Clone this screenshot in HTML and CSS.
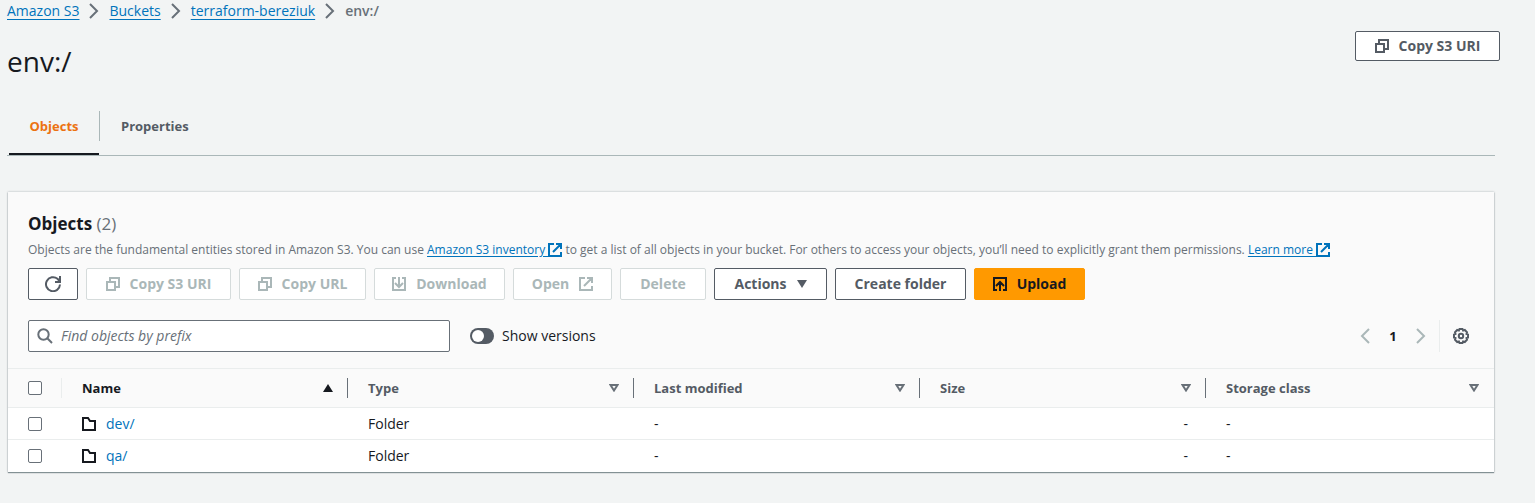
FILE: index.html
```html
<!DOCTYPE html>
<html lang="en">
<head>
<meta charset="utf-8">
<title>env:/ - S3 bucket</title>
<link rel="stylesheet" href="styles.css">
</head>
<body>
<svg class="sprite" aria-hidden="true">
  <symbol id="copy" viewBox="0 0 14 14"><path d="M1 5h8v8H1zM4 4V1h9v9h-3" /></symbol>
  <symbol id="chevron" viewBox="0 0 10 16"><path d="M1 1l7 7-7 7" /></symbol>
  <symbol id="external" viewBox="0 0 14 14"><path d="M6 1H1v12h12V9M8 1h5v5M13 1L5 9" /></symbol>
  <symbol id="download" viewBox="0 0 14 14"><path d="M4 1H1v12h12V1h-3M7 0v10M3 6l4 4 4-4" /></symbol>
  <symbol id="upload" viewBox="0 0 14 14"><path d="M4 13H1V1h12v12h-3M7 14V5M3 9l4-4 4 4" /></symbol>
  <symbol id="folder" viewBox="0 0 14 14"><path d="M1 1h5l2 3h5v9H1z" /></symbol>
  <symbol id="sort" viewBox="0 0 10 8"><path d="M1.500 1h7L5 6.500z" /></symbol>
</svg>
<header class="page-header">
  <nav class="breadcrumbs" aria-label="Breadcrumbs">
    <a href="#s3">Amazon S3</a>
    <svg class="crumb-arrow"><use href="#chevron"/></svg>
    <a href="#buckets">Buckets</a>
    <svg class="crumb-arrow"><use href="#chevron"/></svg>
    <a href="#bucket">terraform-bereziuk</a>
    <svg class="crumb-arrow"><use href="#chevron"/></svg>
    <span class="crumb-current">env:/</span>
  </nav>
  <div class="title-row">
    <h1>env:/</h1>
    <button class="btn btn-copy-uri btn-short" type="button"><svg class="icon"><use href="#copy"/></svg>Copy S3 URI</button>
  </div>
</header>
<main>
  <div class="tabs" role="tablist">
    <button class="tab tab-active" type="button" role="tab" aria-selected="true">Objects</button>
    <button class="tab" type="button" role="tab" aria-selected="false">Properties</button>
  </div>
  <section class="card">
    <div class="card-head">
      <h2>Objects <span class="count">(2)</span></h2>
      <p class="description">Objects are the fundamental entities stored in Amazon S3. You can use <a href="#inventory">Amazon S3 inventory <svg class="icon"><use href="#external"/></svg></a> to get a list of all objects in your bucket. For others to access your objects, you’ll need to explicitly grant them permissions. <a href="#learn">Learn more <svg class="icon"><use href="#external"/></svg></a></p>
      <div class="actions">
        <button class="btn btn-refresh" type="button" aria-label="Refresh"><svg class="icon-refresh" viewBox="0 0 16 16"><path d="M15 8.500A7 7 0 1 1 12.500 2.800L14.500 5M15 0v6H10" /></svg></button>
        <button class="btn btn-copy-uri" type="button" disabled><svg class="icon"><use href="#copy"/></svg>Copy S3 URI</button>
        <button class="btn btn-copy-url" type="button" disabled><svg class="icon"><use href="#copy"/></svg>Copy URL</button>
        <button class="btn btn-download" type="button" disabled><svg class="icon"><use href="#download"/></svg>Download</button>
        <button class="btn btn-open" type="button" disabled>Open<svg class="icon"><use href="#external"/></svg></button>
        <button class="btn btn-delete" type="button" disabled>Delete</button>
        <button class="btn btn-actions" type="button">Actions<svg class="caret" viewBox="0 0 10 8"><path d="M0 0h10L5 8z" /></svg></button>
        <button class="btn btn-create" type="button">Create folder</button>
        <button class="btn btn-upload" type="button"><svg class="icon"><use href="#upload"/></svg>Upload</button>
      </div>
      <div class="filters">
        <label class="search">
          <svg class="icon-search" viewBox="0 0 16 16"><circle cx="6.500" cy="6.500" r="5.200"/><path d="M10.300 10.300L15 15" /></svg>
          <input type="search" placeholder="Find objects by prefix" aria-label="Find objects by prefix">
        </label>
        <label class="versions"><input class="toggle" type="checkbox" role="switch">Show versions</label>
        <div class="pager">
          <button class="icon-btn" type="button" aria-label="Previous page" disabled><svg class="page-arrow flip"><use href="#chevron"/></svg></button>
          <button class="page-number" type="button">1</button>
          <button class="icon-btn" type="button" aria-label="Next page" disabled><svg class="page-arrow"><use href="#chevron"/></svg></button>
          <span class="pager-divider"></span>
          <button class="icon-btn" type="button" aria-label="Preferences"><svg class="icon-gear" viewBox="0 0 16 16"><path d="M6.500 1h3l.6 1.500 1.700-.5 2.200 2.200-.5 1.700 1.500.6v3l-1.500.6.5 1.700-2.200 2.200-1.700-.5-.6 1.500h-3l-.6-1.500-1.700.5L2 11.800l.5-1.700L1 9.500v-3l1.500-.6L2 4.200 4.200 2l1.700.5z"/><circle cx="8" cy="8" r="2.200"/></svg></button>
        </div>
      </div>
    </div>
    <table>
      <colgroup><col class="col-check"><col><col><col><col><col class="col-last"></colgroup>
      <thead>
        <tr>
          <th class="check light"><input class="checkbox" type="checkbox" aria-label="Select all"></th>
          <th class="sorted"><div class="th-inner">Name<svg class="sort sort-asc" viewBox="0 0 10 8"><path d="M0 8h10L5 0z" /></svg></div></th>
          <th><div class="th-inner">Type<svg class="sort"><use href="#sort"/></svg></div></th>
          <th><div class="th-inner">Last modified<svg class="sort"><use href="#sort"/></svg></div></th>
          <th><div class="th-inner">Size<svg class="sort"><use href="#sort"/></svg></div></th>
          <th><div class="th-inner">Storage class<svg class="sort"><use href="#sort"/></svg></div></th>
        </tr>
      </thead>
      <tbody>
        <tr>
          <td class="check"><input class="checkbox" type="checkbox" aria-label="Select dev/"></td>
          <td><a class="object" href="#dev"><svg class="icon"><use href="#folder"/></svg>dev/</a></td>
          <td>Folder</td><td>-</td><td class="num">-</td><td>-</td>
        </tr>
        <tr>
          <td class="check"><input class="checkbox" type="checkbox" aria-label="Select qa/"></td>
          <td><a class="object" href="#qa"><svg class="icon"><use href="#folder"/></svg>qa/</a></td>
          <td>Folder</td><td>-</td><td class="num">-</td><td>-</td>
        </tr>
      </tbody>
    </table>
  </section>
</main>
</body>
</html>
```
FILE: styles.css
```css
* { box-sizing: border-box; }
body {
  margin: 0;
  background: #f2f4f4;
  color: #16191f;
  font: 14px/20px "Open Sans", "Noto Sans", sans-serif;
}
button, input { font: inherit; color: inherit; }
button { margin: 0; padding: 0; border: 0; background: none; }
h1, h2, p { margin: 0; }
a { color: #0073bb; }
svg { flex: none; fill: none; stroke: currentColor; stroke-width: 2; }
.sprite { position: absolute; width: 0; height: 0; }
.icon { width: 14px; height: 14px; }

.page-header { padding: 1px 35px 0 7px; }
.breadcrumbs { display: flex; align-items: center; }
.breadcrumbs a { text-underline-offset: 3px; }
.crumb-arrow { width: 10px; height: 16px; margin: 0 10px; color: #687078; }
.crumb-current { color: #687078; font-weight: 600; }
.title-row { display: flex; justify-content: space-between; align-items: flex-start; padding-top: 10px; }
h1 { padding: 12px 0 1px; font-size: 28px; line-height: 36px; font-weight: 400; }

.btn {
  display: flex;
  align-items: center;
  justify-content: center;
  gap: 10px;
  height: 32px;
  border: 1px solid #545b64;
  border-radius: 2px;
  background: #fff;
  color: #545b64;
  font-weight: 700;
  white-space: nowrap;
}
.btn:disabled { border-color: #d5dbdb; color: #aab7b8; }
.btn-short { height: 30px; }
.btn-refresh { width: 50px; }
.btn-copy-uri { width: 145px; }
.btn-copy-url { width: 127px; }
.btn-download { width: 131px; }
.btn-open { width: 99px; }
.btn-delete { width: 86px; }
.btn-actions { width: 113px; }
.btn-create { width: 131px; }
.btn-upload { width: 111px; border-color: #f90; background: #f90; color: #16191f; }
.icon-refresh { width: 16px; height: 16px; }
.caret { width: 10px; height: 8px; fill: currentColor; stroke: none; }

main { padding: 0 40px 30px 7px; }
.tabs { display: flex; margin-top: 31px; padding-left: 2px; border-bottom: 1px solid #aab7b8; }
.tab { height: 44px; padding: 0 20px 14px; color: #545b64; font-size: 13px; font-weight: 700; }
.tab-active {
  min-width: 90px;
  color: #ec7211;
  padding-bottom: 12px;
  border-bottom: 2px solid #16191f;
}
.tab + .tab { height: 30px; padding: 0 21px; border-left: 1px solid #aab7b8; }

.card {
  margin: 36px 1px 0;
  background: #fff;
  box-shadow: 0 1px 1px rgba(0, 28, 36, .4), 0 0 2px rgba(0, 28, 36, .3);
}
.card-head { padding: 20px 20px 16px; background: #fafafa; }
h2 { font-size: 17px; line-height: 24px; font-weight: 700; }
.count { color: #687078; font-weight: 400; }
.description { padding-top: 4px; color: #687078; font-size: 12px; line-height: 20px; }
.description a { text-underline-offset: 2px; }
.description .icon { vertical-align: -3px; }
.actions { display: flex; gap: 8px; padding-top: 8px; }
.filters { display: flex; align-items: center; padding-top: 20px; }
.search {
  display: flex;
  align-items: center;
  gap: 8px;
  width: 422px;
  height: 32px;
  padding: 0 8px;
  border: 1px solid #687078;
  border-radius: 2px;
  background: #fff;
  color: #687078;
}
.icon-search { width: 16px; height: 16px; }
.search input { flex: 1; min-width: 0; padding: 0; border: 0; outline: 0; background: none; }
.search input::placeholder { color: #687078; font-style: italic; opacity: 1; }
.versions { display: flex; align-items: center; gap: 8px; margin-left: 20px; }
.toggle {
  appearance: none;
  width: 24px;
  height: 16px;
  margin: 0;
  padding: 2px;
  border-radius: 8px;
  background: #545b64;
}
.toggle::before { content: ""; display: block; width: 12px; height: 12px; border-radius: 50%; background: #fff; }
.toggle:checked::before { margin-left: 8px; }
.pager { display: flex; align-items: center; margin-left: auto; margin-right: 5px; }
.icon-btn { display: flex; color: #545b64; }
.icon-btn:disabled { color: #aab7b8; }
.page-arrow { width: 10px; height: 16px; }
.flip { transform: scaleX(-1); }
.page-number { width: 46px; font-size: 13px; font-weight: 700; }
.pager-divider { width: 1px; height: 32px; margin: 0 13px; background: #eaeded; }
.icon-gear { width: 16px; height: 16px; }

table { width: 100%; border-spacing: 0; table-layout: fixed; }
.col-check { width: 54px; }
.col-last { width: 288px; }
th {
  height: 40px;
  padding: 0;
  border: solid #eaeded;
  border-width: 1px 0;
  background: #fafafa;
  color: #545b64;
  font-size: 13px;
  text-align: left;
}
.sorted { color: #16191f; }
.th-inner { display: flex; align-items: center; justify-content: space-between; height: 20px; padding: 0 14px 0 20px; border-right: 1px solid #687078; }
th:last-child .th-inner { padding-right: 15px; border-right: 0; }
.sort { width: 10px; height: 8px; color: #687078; }
.sort-asc { color: #16191f; fill: currentColor; stroke: none; }
td { height: 32px; padding: 0 20px; }
tbody tr:not(:last-child) td { border-bottom: 1px solid #eaeded; }
.check { padding: 0 0 0 20px; }
.light { background: linear-gradient(#eaeded, #eaeded) right center / 1px 20px no-repeat #fafafa; }
.num { text-align: right; padding-right: 18px; }
.checkbox {
  appearance: none;
  display: block;
  width: 14px;
  height: 14px;
  margin: 0;
  border: 1px solid #687078;
  border-radius: 2px;
  background: #fff;
}
.checkbox:checked { background: #0073bb; }
.object { display: flex; align-items: center; gap: 10px; text-decoration: none; }
.object .icon { color: #16191f; }
```
